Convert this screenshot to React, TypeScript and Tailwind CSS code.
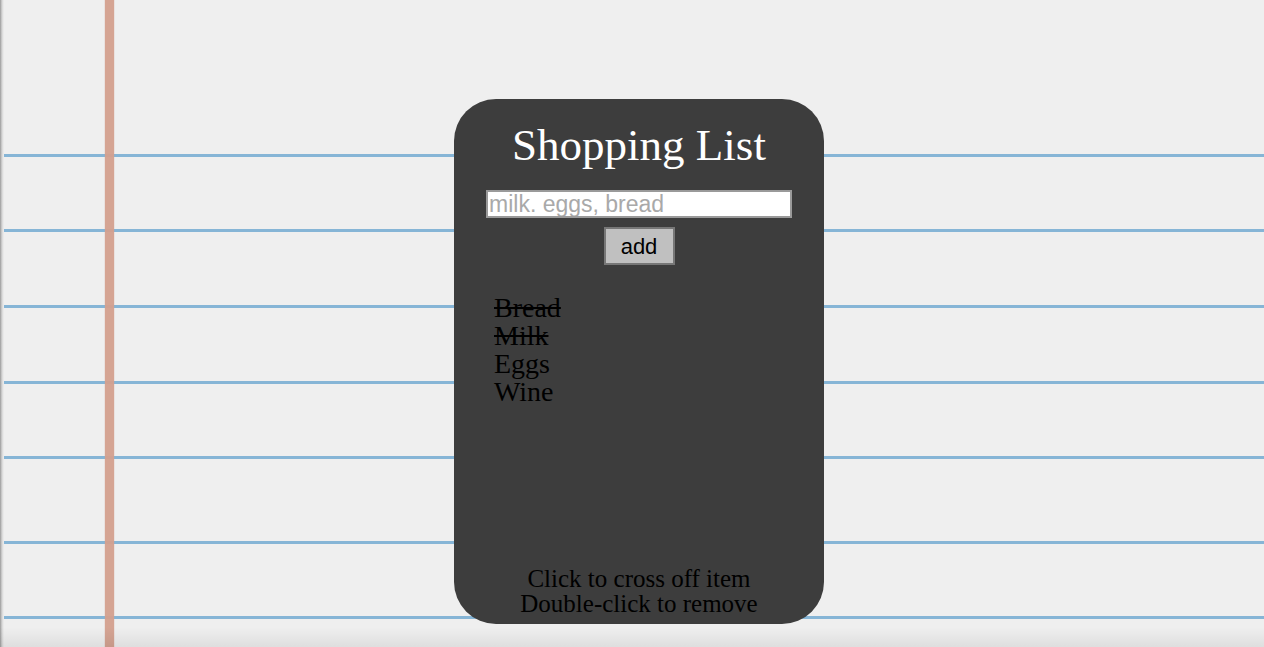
import React from "react";

const items = [
  { name: "Bread", done: true },
  { name: "Milk", done: true },
  { name: "Eggs", done: false },
  { name: "Wine", done: false },
];

export default function App() {
  return (
    <div className="relative h-[647px] w-full overflow-hidden bg-[#efefef]">
      {/* notebook paper background */}
      <div className="absolute inset-0 flex flex-col pt-[154px]">
        <div className="h-[3px] bg-[#86b5d6]" />
        <div className="mt-[72px] h-[3px] bg-[#86b5d6]" />
        <div className="mt-[73px] h-[3px] bg-[#86b5d6]" />
        <div className="mt-[73px] h-[3px] bg-[#86b5d6]" />
        <div className="mt-[72px] h-[3px] bg-[#86b5d6]" />
        <div className="mt-[82px] h-[3px] bg-[#86b5d6]" />
        <div className="mt-[72px] h-[3px] bg-[#86b5d6]" />
      </div>
      <div className="absolute inset-y-0 left-[105px] w-[9px] bg-[#d4a08f] opacity-95 shadow-[0_0_1px_#d4a08f]" />
      <div className="absolute inset-y-0 left-0 w-[4px] bg-gradient-to-r from-[#9a9a9a] via-[#d6d6d6] to-[#efefef]" />
      <div className="absolute inset-x-0 bottom-0 h-[20px] bg-gradient-to-b from-[rgba(0,0,0,0)] to-[rgba(0,0,0,0.07)]" />

      <div className="relative flex justify-center pl-[14px] pt-[99px]">
        <div
          className="flex h-[525px] w-[370px] flex-col items-center rounded-[42px] bg-[#3d3d3d] pt-[20px] pb-[8px]"
          style={{ fontFamily: '"Liberation Serif", "Times New Roman", serif' }}
        >
          <h1 className="text-[45px] leading-[52px] text-white">Shopping List</h1>
          <input
            className="mt-[19px] h-[28px] w-[306px] border-2 border-[#9a9a9a] bg-white px-[1px] text-[23px] leading-[24px] text-black outline-none placeholder:text-[#a9a9a9]"
            style={{ fontFamily: '"Liberation Sans", Arial, sans-serif' }}
            placeholder="milk. eggs, bread"
          />
          <button
            className="mt-[9px] h-[38px] w-[71px] border-2 border-[#777777] bg-[#c0c0c0] text-[22px] text-black"
            style={{ fontFamily: '"Liberation Sans", Arial, sans-serif' }}
          >
            add
          </button>
          <ul className="mt-[29px] w-full pl-[40px] text-[28px] leading-[28px] text-black">
            {items.map((it) => (
              <li key={it.name} className={it.done ? "line-through" : ""}>
                {it.name}
              </li>
            ))}
          </ul>
          <div className="mt-auto text-center text-[25px] leading-[25px] text-black">
            <div>Click to cross off item</div>
            <div>Double-click to remove</div>
          </div>
        </div>
      </div>
    </div>
  );
}
